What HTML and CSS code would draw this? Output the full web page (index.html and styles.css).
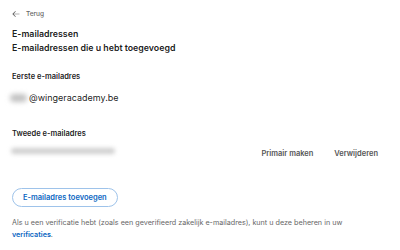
FILE: index.html
```html
<!DOCTYPE html>
<html lang="nl">
<head>
<meta charset="utf-8">
<title>E-mailadressen</title>
<link rel="stylesheet" href="styles.css">
</head>
<body>
<main class="page">
  <a class="back" href="#">
    <svg class="back-icon" viewBox="0 0 16 16" width="8" height="8" aria-hidden="true"><path d="M15 7.3H3.4l4.3-4.3-1-1L1 7.7v.6L6.7 14l1-1-4.3-4.3H15z" fill="currentColor"/></svg>
    <span>Terug</span>
  </a>
  <h1 class="title">E-mailadressen<br>E-mailadressen die u hebt toegevoegd</h1>

  <section class="group">
    <h2 class="label">Eerste e-mailadres</h2>
    <div class="email"><span class="blur blur-short" aria-hidden="true"></span><span>@wingeracademy.be</span></div>
  </section>

  <section class="group second">
    <h2 class="label">Tweede e-mailadres</h2>
    <div class="row">
      <span class="blur blur-long" aria-hidden="true"></span>
      <div class="actions">
        <button class="link-btn">Primair maken</button>
        <button class="link-btn">Verwijderen</button>
      </div>
    </div>
  </section>

  <button class="add-btn">E-mailadres toevoegen</button>

  <p class="note">Als u een verificatie hebt (zoals een geverifieerd zakelijk e-mailadres), kunt u deze beheren in uw <a href="#" class="note-link">verificaties</a>.</p>
</main>
</body>
</html>
```

FILE: styles.css
```css
* { box-sizing: border-box; }
html, body { margin: 0; padding: 0; background: #fff; }
body {
  font-family: Inter, "Noto Sans", "Liberation Sans", sans-serif;
  color: rgba(0,0,0,0.9);
  width: 400px;
  height: 250px;
  overflow: hidden;
}
.page {
  padding: 9px 12px 0 12px;
  display: flex;
  flex-direction: column;
}
.back {
  display: flex;
  align-items: center;
  gap: 6px;
  color: #666;
  text-decoration: none;
  font-size: 6.5px;
  font-weight: 500;
  height: 10px;
}
.back-icon { color: #666; }
.title {
  margin: 8px 0 0 0;
  font-size: 8.8px;
  font-weight: 600;
  line-height: 14px;
}
.group { margin-top: 17px; }
.second { margin-top: 25px; }
.label {
  margin: 0;
  font-size: 7.5px;
  font-weight: 600;
  line-height: 10px;
}
.email {
  margin-top: 10px;
  font-size: 9px;
  line-height: 12px;
  color: rgba(0,0,0,0.9);
  display: flex;
  align-items: center;
}
.blur {
  display: block;
  background: #c2c2c2;
  filter: blur(2.5px);
  border-radius: 5px;
}
.blur-short { width: 17px; height: 8px; margin: 0 2px 0 -2px; }
.row {
  margin-top: 5px;
  display: flex;
  align-items: center;
  justify-content: space-between;
  height: 14px;
}
.blur-long { width: 104px; height: 6px; margin-left: -1px; background: #cfcfcf; filter: blur(2px); }
.actions {
  display: flex;
  gap: 21px;
  margin-right: 10px;
  margin-top: 4px;
}
.link-btn {
  border: 0;
  background: none;
  padding: 0;
  font-family: inherit;
  font-size: 7.5px;
  font-weight: 600;
  color: #555;
}
.add-btn {
  align-self: flex-start;
  margin-top: 30px;
  height: 19px;
  padding: 0 10px;
  border: 1px solid #9ec3ea;
  border-radius: 10px;
  background: #fff;
  color: #0a66c2;
  font-family: inherit;
  font-size: 7.5px;
  font-weight: 600;
}
.note {
  margin: 10px 0 0 0;
  font-size: 7.2px;
  line-height: 12px;
  color: #666;
  width: 360px;
}
.note-link {
  color: #0a66c2;
  font-weight: 600;
  text-decoration: none;
}
```
